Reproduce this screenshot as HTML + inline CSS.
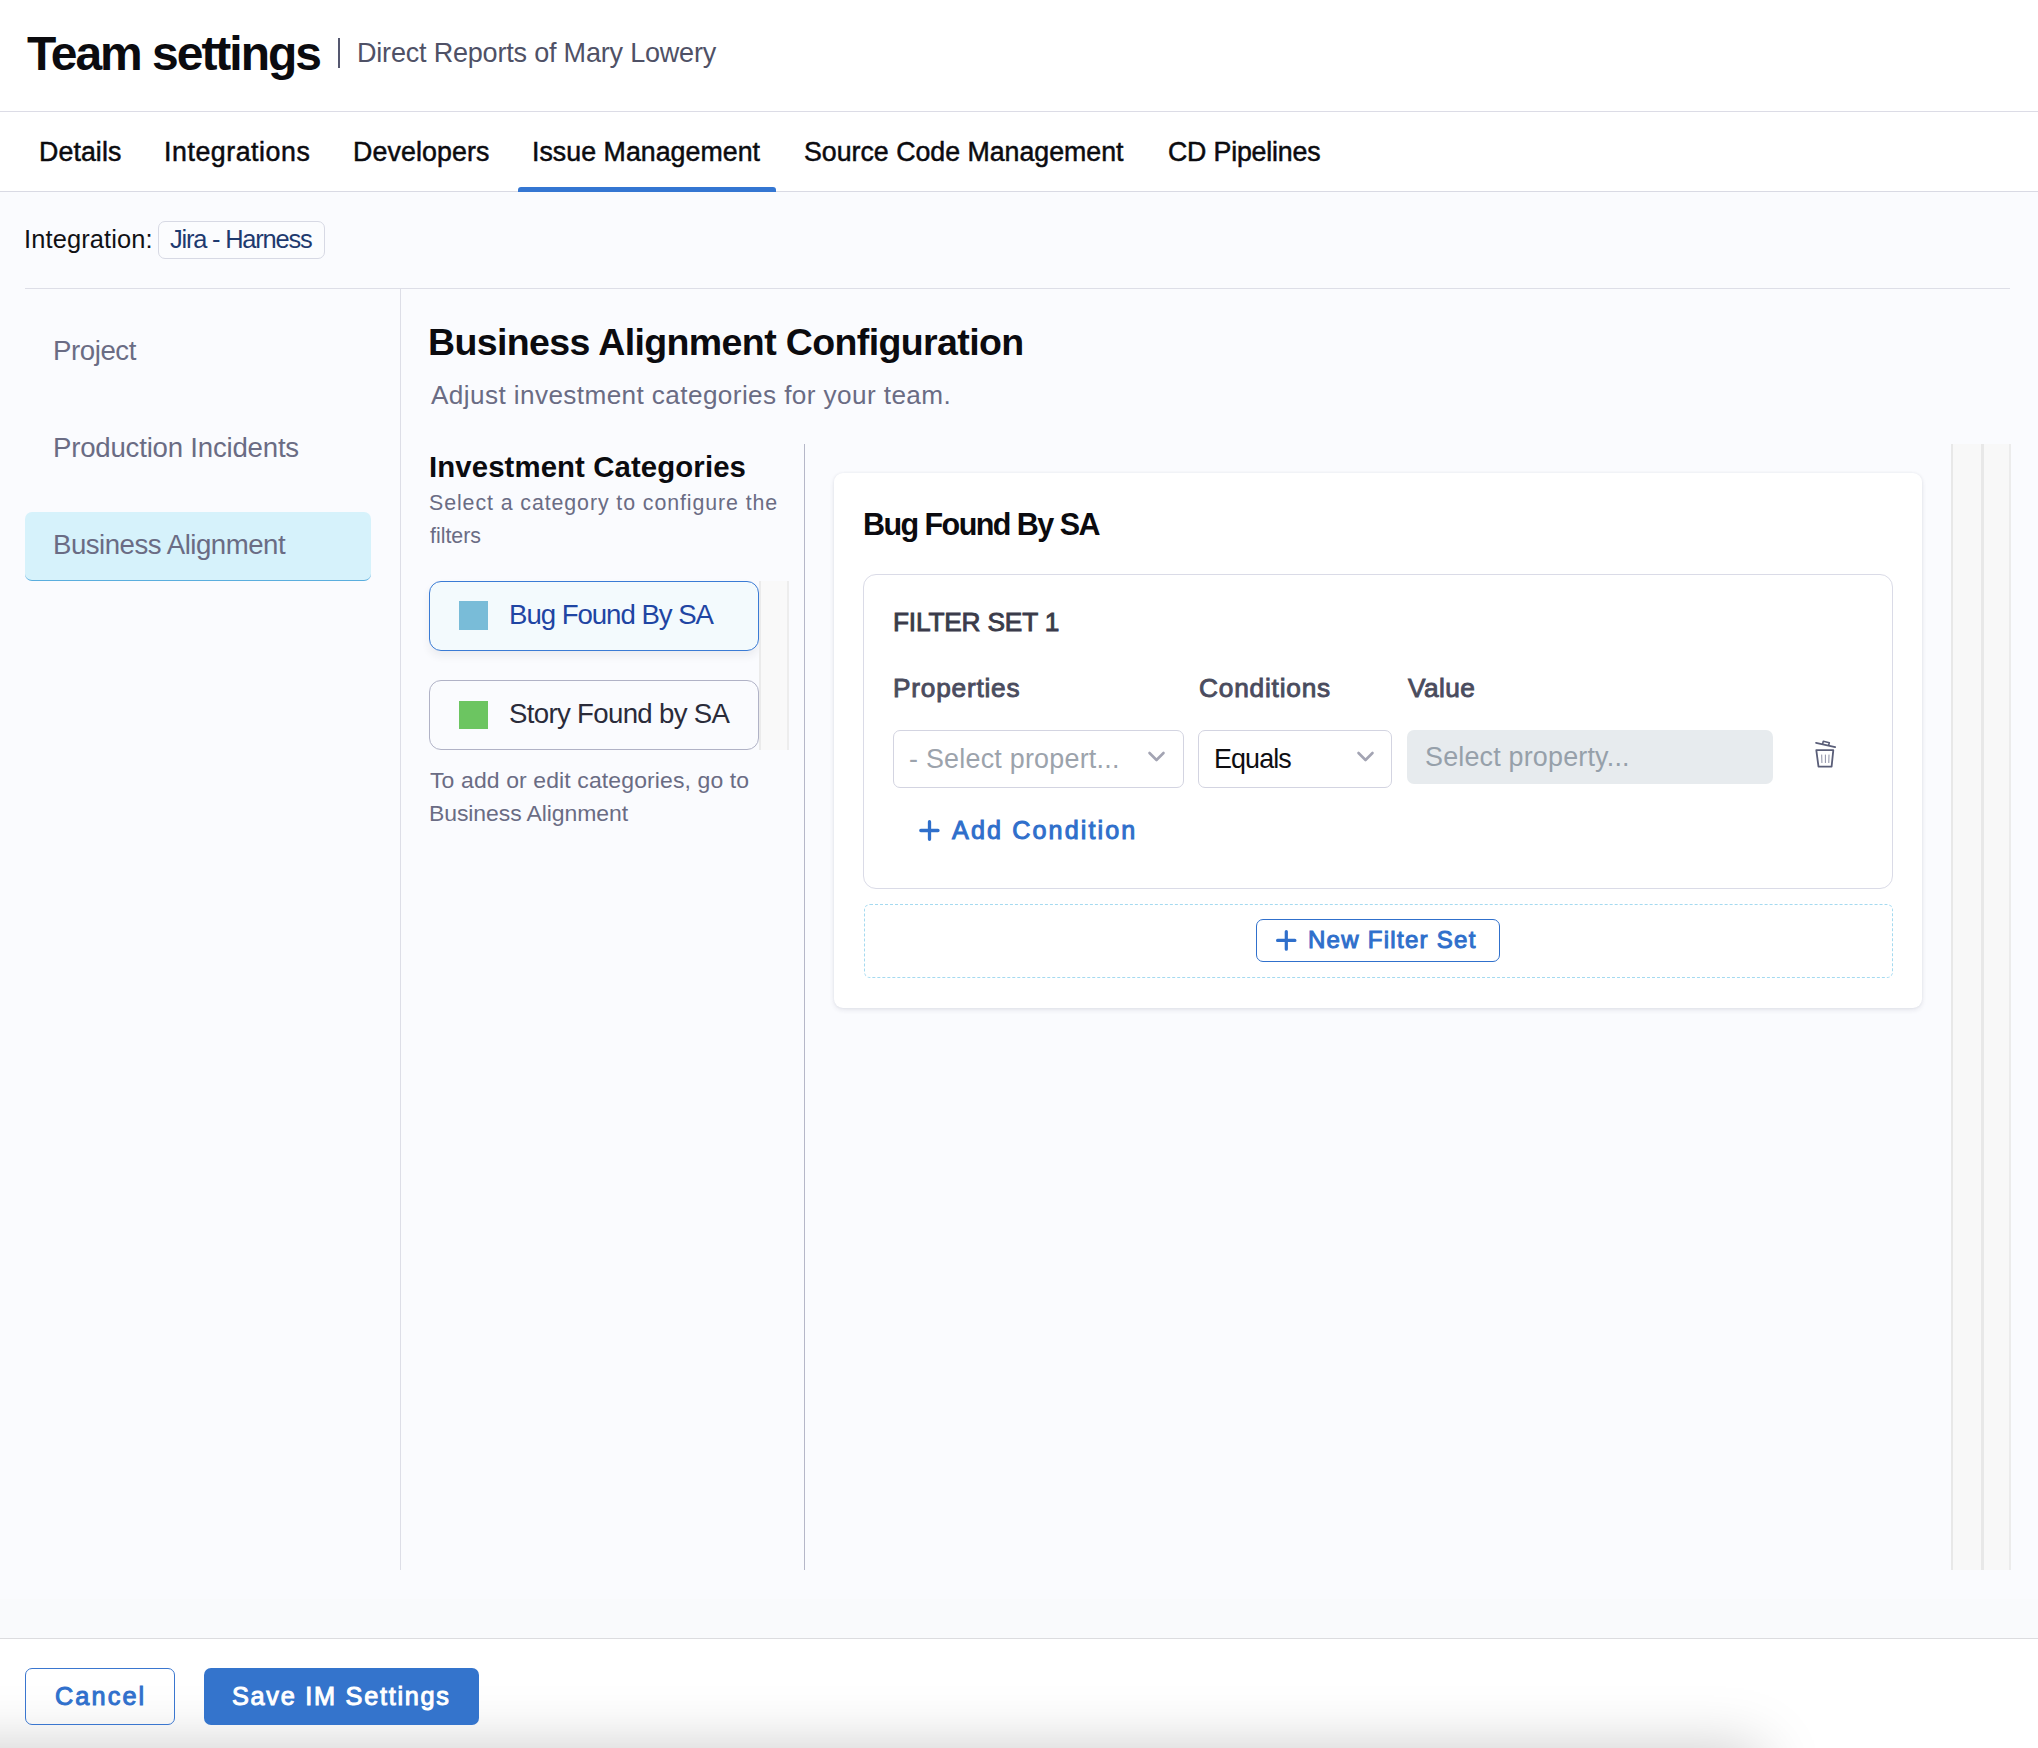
<!DOCTYPE html>
<html><head><meta charset="utf-8"><style>
*{box-sizing:border-box;margin:0;padding:0}
html,body{width:2038px;height:1748px;overflow:hidden}
body{position:relative;background:#fafbfe;font-family:"Liberation Sans",sans-serif}
.t{position:absolute;white-space:nowrap}
.b{position:absolute}
</style></head><body>

<div class="b" style="left:0;top:0;width:2038px;height:192px;background:#ffffff"></div>
<div class="b" style="left:0;top:111px;width:2038px;height:1px;background:#dcdce6"></div>
<div class="b" style="left:338px;top:38px;width:2px;height:30px;background:#555870"></div>
<div class="b" style="left:0;top:191px;width:2038px;height:1px;background:#d9dae4"></div>
<div class="b" style="left:518px;top:187px;width:258px;height:5px;background:#3476d2;border-radius:3px 3px 0 0"></div>

<div class="b" style="left:158px;top:221px;width:167px;height:38px;border:1px solid #d7d9e4;border-radius:7px;background:#fbfcfe"></div>
<div class="b" style="left:25px;top:288px;width:1985px;height:1px;background:#dddee7"></div>
<div class="b" style="left:400px;top:289px;width:1px;height:1281px;background:#dddee7"></div>

<div class="b" style="left:25px;top:512px;width:346px;height:69px;background:#d6f2fb;border-radius:7px;border-bottom:1.5px solid #5aaede"></div>

<div class="b" style="left:804px;top:444px;width:1px;height:1126px;background:#b5b7c8"></div>

<div class="b" style="left:429px;top:581px;width:330px;height:70px;border:1.5px solid #3a7bd5;border-radius:12px;background:#f3fafd;box-shadow:0 5px 8px rgba(40,40,60,0.07)"></div>
<div class="b" style="left:459px;top:601px;width:29px;height:29px;background:#79bcd8"></div>
<div class="b" style="left:429px;top:680px;width:330px;height:70px;border:1px solid #b0b2c6;border-radius:12px;background:#fafbfe"></div>
<div class="b" style="left:459px;top:701px;width:29px;height:28px;background:#6cc561"></div>
<div class="b" style="left:759px;top:581px;width:30px;height:169px;background:#f9f9f9;border-left:2px solid #ebebeb;border-right:2px solid #ededed"></div>

<div class="b" style="left:834px;top:473px;width:1088px;height:535px;background:#ffffff;border-radius:9px;box-shadow:0 2px 5px rgba(40,44,80,0.10),0 0 3px rgba(40,44,80,0.06)"></div>
<div class="b" style="left:863px;top:574px;width:1030px;height:315px;border:1.5px solid #dadbe7;border-radius:13px"></div>

<div class="b" style="left:893px;top:730px;width:291px;height:58px;border:1.5px solid #d3d4e1;border-radius:7px;background:#fff"></div>
<div class="b" style="left:1198px;top:730px;width:194px;height:58px;border:1.5px solid #d3d4e1;border-radius:7px;background:#fff"></div>
<div class="b" style="left:1407px;top:730px;width:366px;height:54px;background:#e7ebee;border-radius:7px"></div>

<svg class="b" style="left:1145px;top:748px" width="24" height="18" viewBox="0 0 24 18"><path d="M4.5 5 L11.5 12 L18.5 5" fill="none" stroke="#a3a4b3" stroke-width="2.6" stroke-linecap="round" stroke-linejoin="round"/></svg>
<svg class="b" style="left:1354px;top:748px" width="24" height="18" viewBox="0 0 24 18"><path d="M4.5 5 L11.5 12 L18.5 5" fill="none" stroke="#a3a4b3" stroke-width="2.6" stroke-linecap="round" stroke-linejoin="round"/></svg>

<svg class="b" style="left:1805px;top:732px" width="40" height="40" viewBox="0 0 40 40">
 <g fill="none" stroke="#5a5e78" stroke-linecap="round" stroke-linejoin="round">
  <path d="M11 10.8 L30.2 15.1" stroke-width="1.7"/>
  <path d="M17.6 11.9 L18.3 9.3 L24.3 10.7 L23.6 13.3" stroke-width="1.6"/>
  <path d="M11.3 18.2 L28.3 18.2 L26.6 34.6 L13.5 34.6 Z" stroke-width="1.8"/>
  <path d="M16.7 23 L16.9 30.6 M20.4 23 L20.4 30.6 M24 23 L23.8 30.6" stroke-width="1" stroke="#8e91a6"/>
 </g>
</svg>

<svg class="b" style="left:917px;top:818px" width="25" height="25" viewBox="0 0 25 25"><path d="M12.5 3.7 V21.3 M3.8 12.5 H21 " stroke="#2f6fcb" stroke-width="3.3" stroke-linecap="round"/></svg>

<div class="b" style="left:864px;top:904px;width:1029px;height:74px;border:1px dashed #a5daf0;border-radius:6px"></div>
<div class="b" style="left:1256px;top:919px;width:244px;height:43px;border:1.5px solid #3070cc;border-radius:7px;background:#fff"></div>
<svg class="b" style="left:1274px;top:928px" width="24" height="25" viewBox="0 0 24 25"><path d="M12.3 3.6 V21.2 M3.6 12.4 H20.9" stroke="#2f6fcb" stroke-width="3.2" stroke-linecap="round"/></svg>

<div class="b" style="left:1951px;top:444px;width:30px;height:1126px;background:#f8f8f8;border-left:2px solid #e8e8e8"></div>
<div class="b" style="left:1981px;top:444px;width:30px;height:1126px;background:#f8f8f8;border-left:3px solid #e8e8e8;border-right:2px solid #ececec"></div>

<div class="b" style="left:0;top:1599px;width:2038px;height:39px;background:#f9fafc"></div>
<div class="b" style="left:0;top:1638px;width:2038px;height:110px;background:#ffffff;border-top:1.5px solid #dcdcdf;overflow:hidden">
  <div class="b" style="left:-300px;top:110px;width:2060px;height:300px;box-shadow:0 0 58px rgba(0,0,0,0.21)"></div>
</div>
<div class="b" style="left:25px;top:1668px;width:150px;height:57px;border:1.5px solid #3a76cf;border-radius:7px"></div>
<div class="b" style="left:204px;top:1668px;width:275px;height:57px;background:#3474cc;border-radius:7px"></div>

<div class="t" id="title" style="left:27.00px;top:30.00px;font-size:47.97px;line-height:47.97px;font-weight:700;color:#0b0b0f;letter-spacing:-2.008px;">Team settings</div>
<div class="t" id="sub" style="left:357.00px;top:39.51px;font-size:27.03px;line-height:27.03px;font-weight:400;color:#4f5166;letter-spacing:-0.200px;">Direct Reports of Mary Lowery</div>
<div class="t" id="tab1" style="left:39.00px;top:139.16px;font-size:26.74px;line-height:26.74px;font-weight:400;color:#0b0b0f;letter-spacing:0.100px;-webkit-text-stroke:0.5px #0b0b0f;">Details</div>
<div class="t" id="tab2" style="left:164.00px;top:139.16px;font-size:26.74px;line-height:26.74px;font-weight:400;color:#0b0b0f;letter-spacing:0.555px;-webkit-text-stroke:0.5px #0b0b0f;">Integrations</div>
<div class="t" id="tab3" style="left:353.00px;top:139.16px;font-size:26.74px;line-height:26.74px;font-weight:400;color:#0b0b0f;letter-spacing:0.122px;-webkit-text-stroke:0.5px #0b0b0f;">Developers</div>
<div class="t" id="tab4" style="left:532.00px;top:139.16px;font-size:26.74px;line-height:26.74px;font-weight:400;color:#0b0b0f;letter-spacing:0.040px;-webkit-text-stroke:0.5px #0b0b0f;">Issue Management</div>
<div class="t" id="tab5" style="left:804.00px;top:139.16px;font-size:26.74px;line-height:26.74px;font-weight:400;color:#0b0b0f;letter-spacing:0.000px;-webkit-text-stroke:0.5px #0b0b0f;">Source Code Management</div>
<div class="t" id="tab6" style="left:1168.00px;top:139.16px;font-size:26.74px;line-height:26.74px;font-weight:400;color:#0b0b0f;letter-spacing:-0.182px;-webkit-text-stroke:0.5px #0b0b0f;">CD Pipelines</div>
<div class="t" id="intl" style="left:24.00px;top:227.47px;font-size:25.44px;line-height:25.44px;font-weight:400;color:#111114;letter-spacing:0.127px;">Integration:</div>
<div class="t" id="intv" style="left:170.00px;top:227.47px;font-size:25.44px;line-height:25.44px;font-weight:400;color:#1e3a6f;letter-spacing:-1.200px;">Jira - Harness</div>
<div class="t" id="nav1" style="left:53.00px;top:337.42px;font-size:27.62px;line-height:27.62px;font-weight:400;color:#6a6c84;letter-spacing:-0.417px;">Project</div>
<div class="t" id="nav2" style="left:53.00px;top:434.22px;font-size:27.62px;line-height:27.62px;font-weight:400;color:#6a6c84;letter-spacing:-0.211px;">Production Incidents</div>
<div class="t" id="nav3" style="left:53.00px;top:531.22px;font-size:27.62px;line-height:27.62px;font-weight:400;color:#6a6c84;letter-spacing:-0.488px;">Business Alignment</div>
<div class="t" id="h1" style="left:428.00px;top:324.46px;font-size:37.50px;line-height:37.50px;font-weight:700;color:#0b0b0f;letter-spacing:-0.616px;">Business Alignment Configuration</div>
<div class="t" id="h1s" style="left:431.00px;top:381.55px;font-size:26.16px;line-height:26.16px;font-weight:400;color:#6a6c84;letter-spacing:0.398px;">Adjust investment categories for your team.</div>
<div class="t" id="h2" style="left:429.00px;top:451.65px;font-size:29.36px;line-height:29.36px;font-weight:700;color:#0b0b0f;letter-spacing:0.100px;">Investment Categories</div>
<div class="t" id="h2s1" style="left:429.00px;top:493.21px;font-size:21.37px;line-height:21.37px;font-weight:400;color:#6a6c84;letter-spacing:0.909px;">Select a category to configure the</div>
<div class="t" id="h2s2" style="left:430.00px;top:526.21px;font-size:21.37px;line-height:21.37px;font-weight:400;color:#6a6c84;letter-spacing:0.000px;">filters</div>
<div class="t" id="cat1" style="left:509.00px;top:601.42px;font-size:27.62px;line-height:27.62px;font-weight:400;color:#1f45a3;letter-spacing:-1.036px;">Bug Found By SA</div>
<div class="t" id="cat2" style="left:509.00px;top:700.22px;font-size:27.62px;line-height:27.62px;font-weight:400;color:#2a2b3a;letter-spacing:-0.669px;">Story Found by SA</div>
<div class="t" id="note1" style="left:430.00px;top:768.96px;font-size:22.97px;line-height:22.97px;font-weight:400;color:#6a6c84;letter-spacing:0.119px;">To add or edit categories, go to</div>
<div class="t" id="note2" style="left:429.00px;top:802.16px;font-size:22.97px;line-height:22.97px;font-weight:400;color:#6a6c84;letter-spacing:-0.082px;">Business Alignment</div>
<div class="t" id="ct" style="left:863.00px;top:508.56px;font-size:30.52px;line-height:30.52px;font-weight:700;color:#0b0b0f;letter-spacing:-1.564px;">Bug Found By SA</div>
<div class="t" id="fs" style="left:893.00px;top:609.29px;font-size:26.24px;line-height:26.24px;font-weight:400;color:#3a3b4a;letter-spacing:-0.173px;-webkit-text-stroke:0.9px #3a3b4a;">FILTER SET 1</div>
<div class="t" id="pl" style="left:893.00px;top:675.49px;font-size:26.24px;line-height:26.24px;font-weight:400;color:#4a4c5e;letter-spacing:0.778px;-webkit-text-stroke:0.9px #4a4c5e;">Properties</div>
<div class="t" id="cl" style="left:1199.00px;top:675.49px;font-size:26.24px;line-height:26.24px;font-weight:400;color:#4a4c5e;letter-spacing:0.800px;-webkit-text-stroke:0.9px #4a4c5e;">Conditions</div>
<div class="t" id="vl" style="left:1408.00px;top:675.49px;font-size:26.24px;line-height:26.24px;font-weight:400;color:#4a4c5e;letter-spacing:0.425px;-webkit-text-stroke:0.9px #4a4c5e;">Value</div>
<div class="t" id="ps" style="left:909.00px;top:745.84px;font-size:26.89px;line-height:26.89px;font-weight:400;color:#9ca3ac;letter-spacing:0.239px;">- Select propert...</div>
<div class="t" id="eq" style="left:1214.00px;top:746.14px;font-size:26.89px;line-height:26.89px;font-weight:400;color:#0e0e12;letter-spacing:-0.880px;">Equals</div>
<div class="t" id="vs" style="left:1425.00px;top:743.74px;font-size:26.89px;line-height:26.89px;font-weight:400;color:#96a0aa;letter-spacing:0.200px;">Select property...</div>
<div class="t" id="ac" style="left:952.00px;top:817.72px;font-size:25.14px;line-height:25.14px;font-weight:400;color:#2f6fcb;letter-spacing:2.125px;-webkit-text-stroke:1.0px #2f6fcb;">Add Condition</div>
<div class="t" id="nf" style="left:1308.00px;top:927.95px;font-size:24.04px;line-height:24.04px;font-weight:400;color:#2f6fcb;letter-spacing:1.262px;-webkit-text-stroke:1.0px #2f6fcb;">New Filter Set</div>
<div class="t" id="cn" style="left:55.00px;top:1684.01px;font-size:25.27px;line-height:25.27px;font-weight:400;color:#3070cc;letter-spacing:2.100px;-webkit-text-stroke:1.0px #3070cc;">Cancel</div>
<div class="t" id="sv" style="left:232.00px;top:1684.01px;font-size:25.27px;line-height:25.27px;font-weight:400;color:#ffffff;letter-spacing:1.733px;-webkit-text-stroke:1.0px #ffffff;">Save IM Settings</div>

</body></html>
